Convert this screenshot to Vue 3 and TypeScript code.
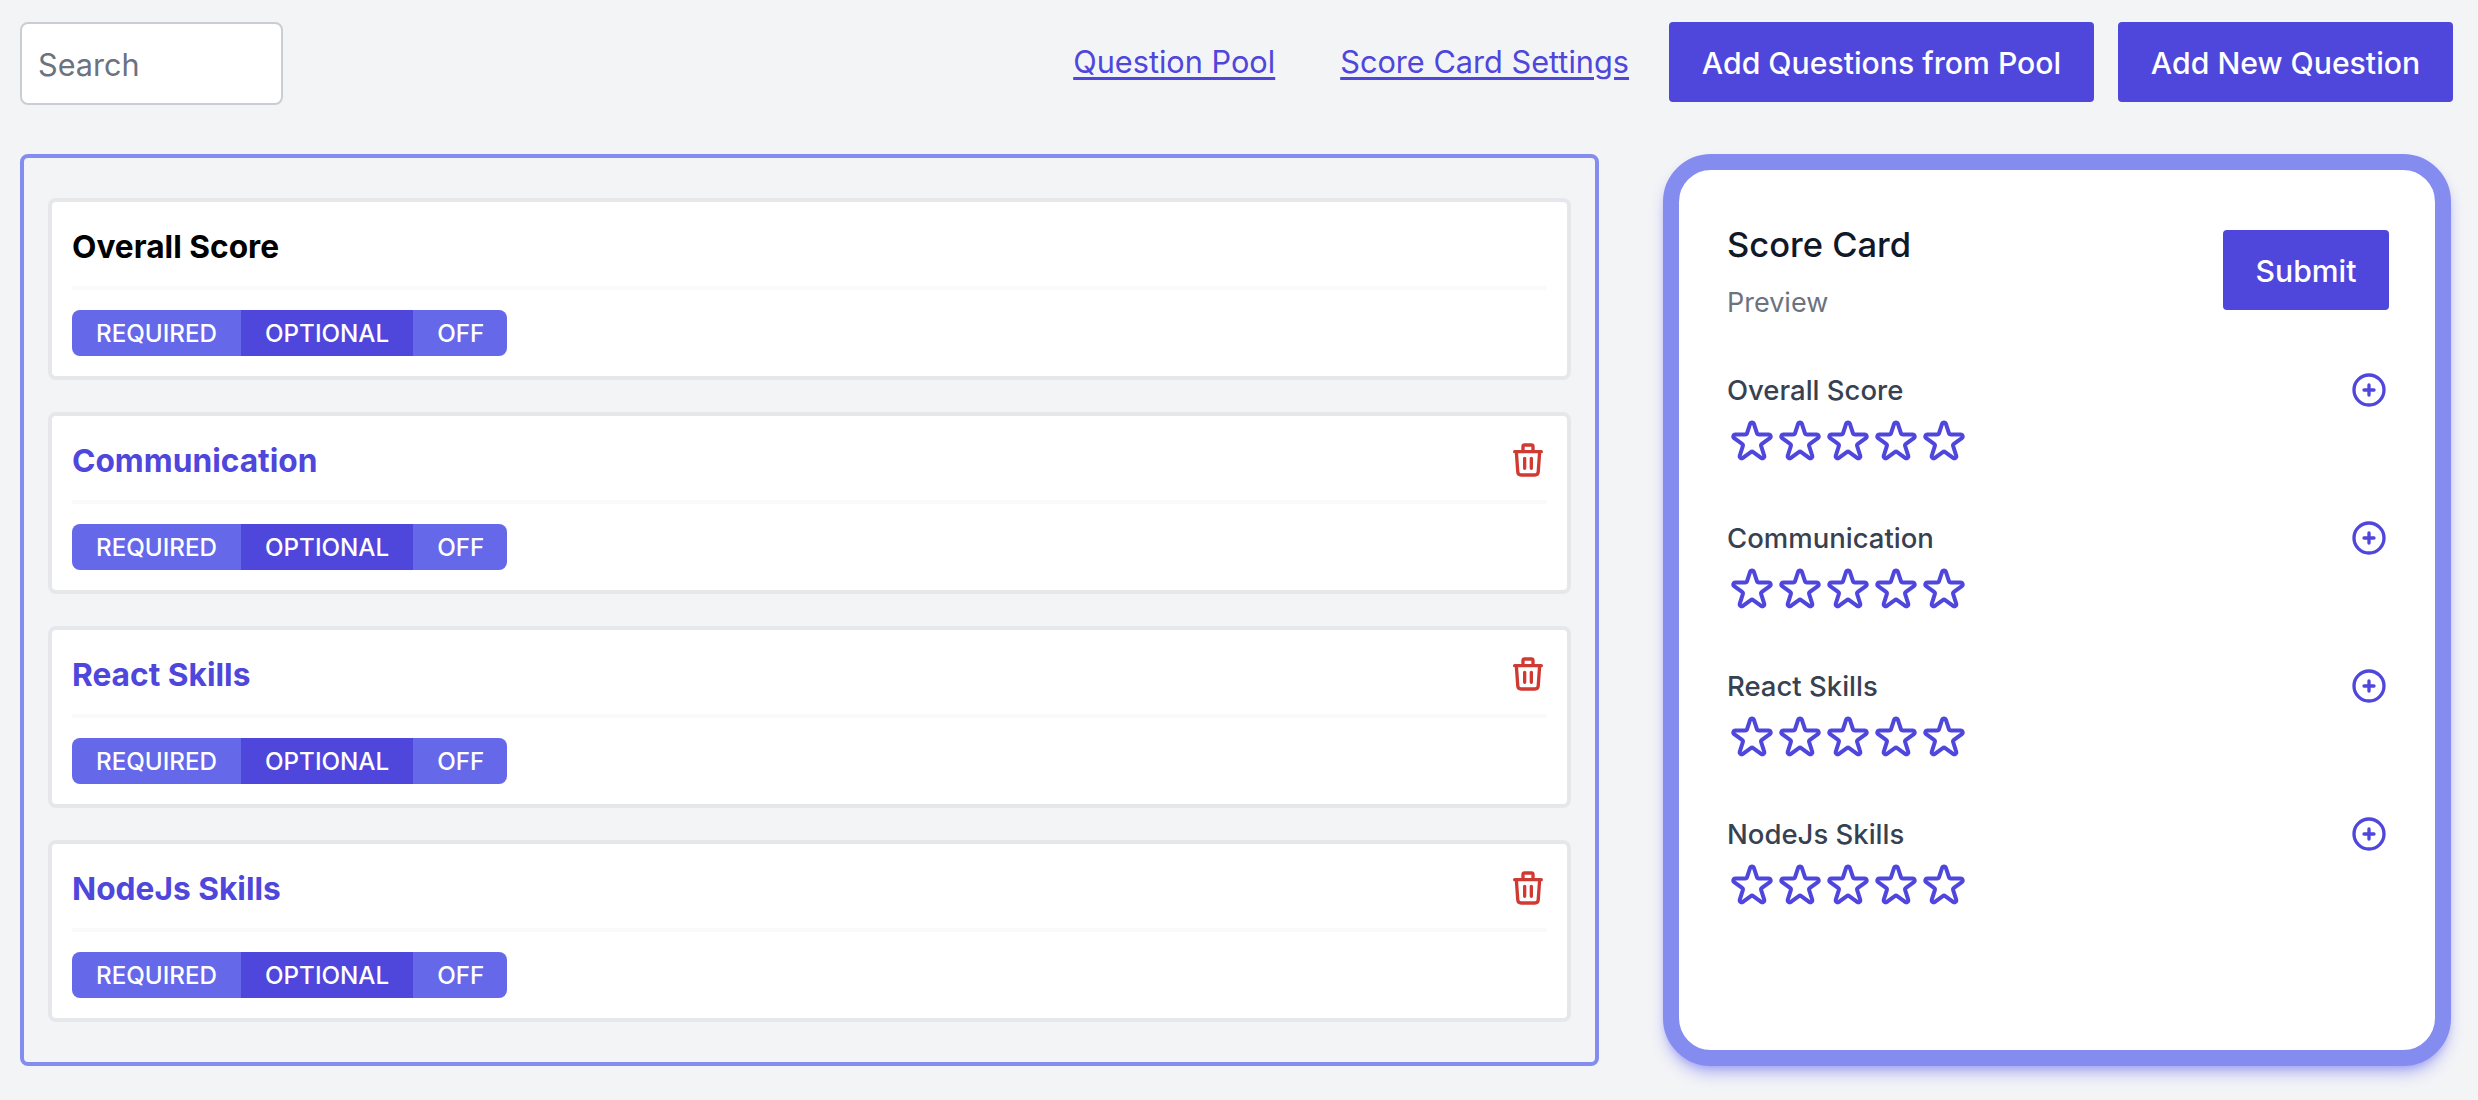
<script setup lang="ts">
const modes = ['Required', 'Optional', 'Off']

const questions = [
  { name: 'Overall Score', locked: true },
  { name: 'Communication', locked: false },
  { name: 'React Skills', locked: false },
  { name: 'NodeJs Skills', locked: false },
]

const starPath =
  'M11.049 2.927c.3-.921 1.603-.921 1.902 0l1.519 4.674a1 1 0 00.95.69h4.915c.969 0 1.371 1.24.588 1.81l-3.976 2.888a1 1 0 00-.363 1.118l1.518 4.674c.3.922-.755 1.688-1.538 1.118l-3.976-2.888a1 1 0 00-1.176 0l-3.976 2.888c-.783.57-1.838-.197-1.538-1.118l1.518-4.674a1 1 0 00-.363-1.118l-3.976-2.888c-.784-.57-.38-1.81.588-1.81h4.914a1 1 0 00.951-.69l1.519-4.674z'
</script>

<template>
  <div class="page">
    <header class="toolbar">
      <input class="search" type="text" placeholder="Search" />
      <nav class="actions">
        <a class="link first" href="#">Question Pool</a>
        <a class="link second" href="#">Score Card Settings</a>
        <button class="btn pool">Add Questions from Pool</button>
        <button class="btn new">Add New Question</button>
      </nav>
    </header>

    <main class="content">
      <section class="builder">
        <article v-for="q in questions" :key="q.name" class="question">
          <div class="question-head">
            <h3 class="question-title" :class="{ locked: q.locked }">{{ q.name }}</h3>
            <svg v-if="!q.locked" class="trash" viewBox="0 0 24 24" fill="none" stroke="currentColor" stroke-width="2" stroke-linecap="round" stroke-linejoin="round">
              <path d="M19 7l-.867 12.142A2 2 0 0116.138 21H7.862a2 2 0 01-1.995-1.858L5 7m5 4v6m4-6v6m1-10V4a1 1 0 00-1-1h-4a1 1 0 00-1 1v3M4 7h16" />
            </svg>
          </div>
          <div class="divider"></div>
          <div class="modes">
            <span v-for="m in modes" :key="m" class="mode" :class="{ active: m === 'Optional' }">{{ m }}</span>
          </div>
        </article>
      </section>

      <aside class="preview">
        <div class="preview-head">
          <div>
            <h2 class="preview-title">Score Card</h2>
            <p class="preview-sub">Preview</p>
          </div>
          <button class="btn submit">Submit</button>
        </div>
        <div v-for="q in questions" :key="q.name" class="rating">
          <div class="rating-head">
            <span class="rating-label">{{ q.name }}</span>
            <svg class="plus" viewBox="0 0 24 24" fill="none" stroke="currentColor" stroke-width="2" stroke-linecap="round" stroke-linejoin="round">
              <path d="M12 9v3m0 0v3m0-3h3m-3 0H9m12 0a9 9 0 11-18 0 9 9 0 0118 0z" />
            </svg>
          </div>
          <div class="stars">
            <svg v-for="n in 5" :key="n" class="star" viewBox="0 0 24 24" fill="none" stroke="currentColor" stroke-width="2" stroke-linecap="round" stroke-linejoin="round">
              <path :d="starPath" />
            </svg>
          </div>
        </div>
      </aside>
    </main>
  </div>
</template>

<style>
body {
  background: #f3f4f6;
}
</style>

<style scoped>
.page {
  box-sizing: border-box;
  width: 2478px;
  height: 1100px;
  padding: 22px 25px 0 20px;
  background: #f3f4f6;
  font-family: Inter, "Liberation Sans", sans-serif;
  overflow: hidden;
}

.toolbar {
  display: flex;
  justify-content: space-between;
  height: 83px;
}

.search {
  box-sizing: border-box;
  width: 263px;
  height: 83px;
  padding: 2px 16px 0;
  border: 2px solid #c9ced6;
  border-radius: 8px;
  background: #fff;
  font: 400 30.6px Inter, sans-serif;
  color: #111827;
  outline: none;
}

.search::placeholder {
  color: #6b7280;
  opacity: 1;
}

.actions {
  display: flex;
  align-items: flex-start;
}

.link {
  margin-top: 17px;
  font-size: 30.7px;
  line-height: 46px;
  color: #4f46dc;
  text-decoration: underline;
  text-underline-offset: 4px;
}

.first {
  margin-right: 65px;
}

.second {
  margin-right: 40px;
}

.btn {
  border: 0;
  border-radius: 4px;
  background: #4f46dc;
  color: #fff;
  font: 500 30.2px Inter, sans-serif;
  padding: 2px 0 0;
}

.pool {
  width: 425px;
  height: 80px;
  margin-right: 24px;
}

.new {
  width: 335px;
  height: 80px;
}

.content {
  display: flex;
  margin-top: 49px;
  gap: 64px;
}

.builder {
  box-sizing: border-box;
  width: 1579px;
  height: 912px;
  padding: 40px 24px 0 24px;
  border: 4px solid #858cf0;
  border-radius: 8px;
}

.question {
  box-sizing: border-box;
  height: 182px;
  margin-bottom: 32px;
  padding: 20px;
  border: 4px solid #e5e7eb;
  border-radius: 8px;
  background: #fff;
}

.question-head {
  display: flex;
  align-items: center;
  justify-content: space-between;
  height: 48px;
}

.question-title {
  margin: 2px 0 0;
  font-size: 31.7px;
  line-height: 48px;
  font-weight: 700;
  color: #4f46dc;
}

.question-title.locked {
  color: #000;
}

.trash {
  width: 40px;
  height: 40px;
  margin-right: -1px;
  color: #cf3a32;
}

.divider {
  height: 4px;
  margin: 16px 0 20px;
  background: #f9fafb;
}

.modes {
  display: inline-flex;
  height: 46px;
  border-radius: 8px;
  overflow: hidden;
}

.mode {
  padding: 0 24px;
  background: #6468e9;
  color: #fff;
  font-size: 24.2px;
  font-weight: 500;
  line-height: 47px;
  text-transform: uppercase;
}

.mode:last-child {
  padding-right: 23px;
}

.mode.active {
  background: #4f46dc;
}

.preview {
  box-sizing: border-box;
  width: 788px;
  height: 912px;
  padding: 48px 46px 0 48px;
  border: 16px solid #858cf0;
  border-radius: 48px;
  background: #fff;
  box-shadow: 0 10px 15px -3px rgba(99, 102, 241, 0.45), 0 4px 6px -2px rgba(99, 102, 241, 0.25);
}

.preview-head {
  display: flex;
  justify-content: space-between;
  align-items: flex-start;
  margin-bottom: 46px;
}

.preview-title {
  margin: 0;
  font-size: 34.5px;
  line-height: 54px;
  font-weight: 500;
  color: #111827;
}

.preview-sub {
  margin: 10px 0 0;
  font-size: 27px;
  line-height: 42px;
  color: #6b7280;
}

.submit {
  width: 166px;
  height: 80px;
  margin-top: 12px;
}

.rating {
  height: 148px;
}

.rating-head {
  display: flex;
  align-items: center;
  justify-content: space-between;
  height: 40px;
  margin-bottom: 8px;
}

.rating-label {
  font-size: 27.5px;
  font-weight: 500;
  color: #374151;
}

.plus {
  width: 40px;
  height: 40px;
  color: #4f46dc;
}

.stars {
  display: flex;
  margin-left: 1px;
}

.star {
  width: 48px;
  height: 48px;
  color: #4f46dc;
}
</style>
